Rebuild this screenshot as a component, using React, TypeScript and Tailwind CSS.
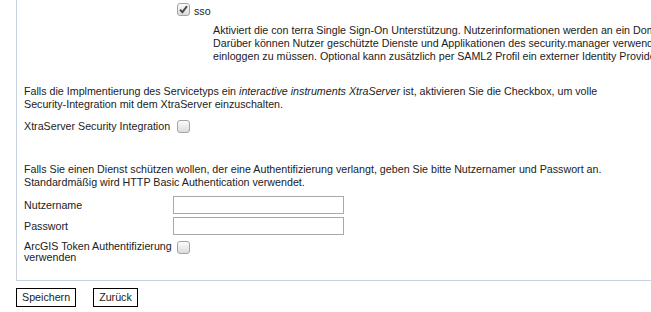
import React from "react";

function Checkbox({ checked = false }: { checked?: boolean }) {
  return (
    <span className="inline-flex h-[13px] w-[13px] shrink-0 items-center justify-center rounded-[3px] border border-[#a4a4a4] bg-gradient-to-b from-[#fcfcfc] to-[#dcdcdc]">
      {checked && (
        <svg width="9" height="9" viewBox="0 0 9 9">
          <path d="M1 4.6 L3.4 7.2 L8 1.2" fill="none" stroke="#4a4a4a" strokeWidth="1.9" />
        </svg>
      )}
    </span>
  );
}

export default function App() {
  return (
    <div className="h-[312px] w-[651px] overflow-hidden bg-white text-[10.7px] leading-[13px] text-[#222]" style={{ fontFamily: '"Liberation Sans", Arial, sans-serif' }}>
      <div className="ml-[16px] w-[700px] border-b border-l border-[#c9d3dd] pb-[17px] pl-[7px]">
        {/* sso */}
        <div className="grid grid-cols-[153px_1fr] pt-[3px]">
          <div />
          <div className="flex items-start gap-[4px]">
            <Checkbox checked />
            <span className="mt-[2px]">sso</span>
          </div>
        </div>
        <div className="ml-[189px] mt-[6px] whitespace-nowrap">
          <div>Aktiviert die con terra Single Sign-On Unterstützung. Nutzerinformationen werden an ein Domain-Cookie übergeben.</div>
          <div>Darüber können Nutzer geschützte Dienste und Applikationen des security.manager verwenden, ohne sich erneut</div>
          <div>einloggen zu müssen. Optional kann zusätzlich per SAML2 Profil ein externer Identity Provider angebunden werden.</div>
        </div>

        {/* XtraServer */}
        <p className="mt-[22px] w-[600px]">
          Falls die Implmentierung des Servicetyps ein <i>interactive instruments XtraServer</i> ist, aktivieren Sie die Checkbox, um volle Security-Integration mit dem XtraServer einzuschalten.
        </p>
        <div className="mt-[5px] grid grid-cols-[153px_1fr] items-center">
          <span>XtraServer Security Integration</span>
          <span className="mt-[4px]"><Checkbox /></span>
        </div>

        {/* Authentifizierung */}
        <p className="mt-[27px] w-[600px]">
          Falls Sie einen Dienst schützen wollen, der eine Authentifizierung verlangt, geben Sie bitte Nutzernamer und Passwort an. Standardmäßig wird HTTP Basic Authentication verwendet.
        </p>
        <div className="mt-[7px] flex flex-col gap-[3px]">
          <div className="grid grid-cols-[149px_1fr] items-center">
            <span>Nutzername</span>
            <input className="h-[18px] w-[171px] border border-[#a9a9a9] bg-white px-1 outline-none" />
          </div>
          <div className="grid grid-cols-[149px_1fr] items-center">
            <span>Passwort</span>
            <input type="password" className="h-[18px] w-[171px] border border-[#a9a9a9] bg-white px-1 outline-none" />
          </div>
          <div className="grid grid-cols-[153px_1fr] items-start pt-[3px]">
            <span className="leading-[11px]">ArcGIS Token Authentifizierung verwenden</span>
            <span><Checkbox /></span>
          </div>
        </div>
      </div>

      <div className="ml-[16px] mt-[7px] flex gap-[17px]">
        <button className="h-[19px] border-[1.5px] border-black bg-white px-[5px] leading-[15px]">Speichern</button>
        <button className="h-[19px] border-[1.5px] border-black bg-white px-[5px] leading-[15px]">Zurück</button>
      </div>
    </div>
  );
}
